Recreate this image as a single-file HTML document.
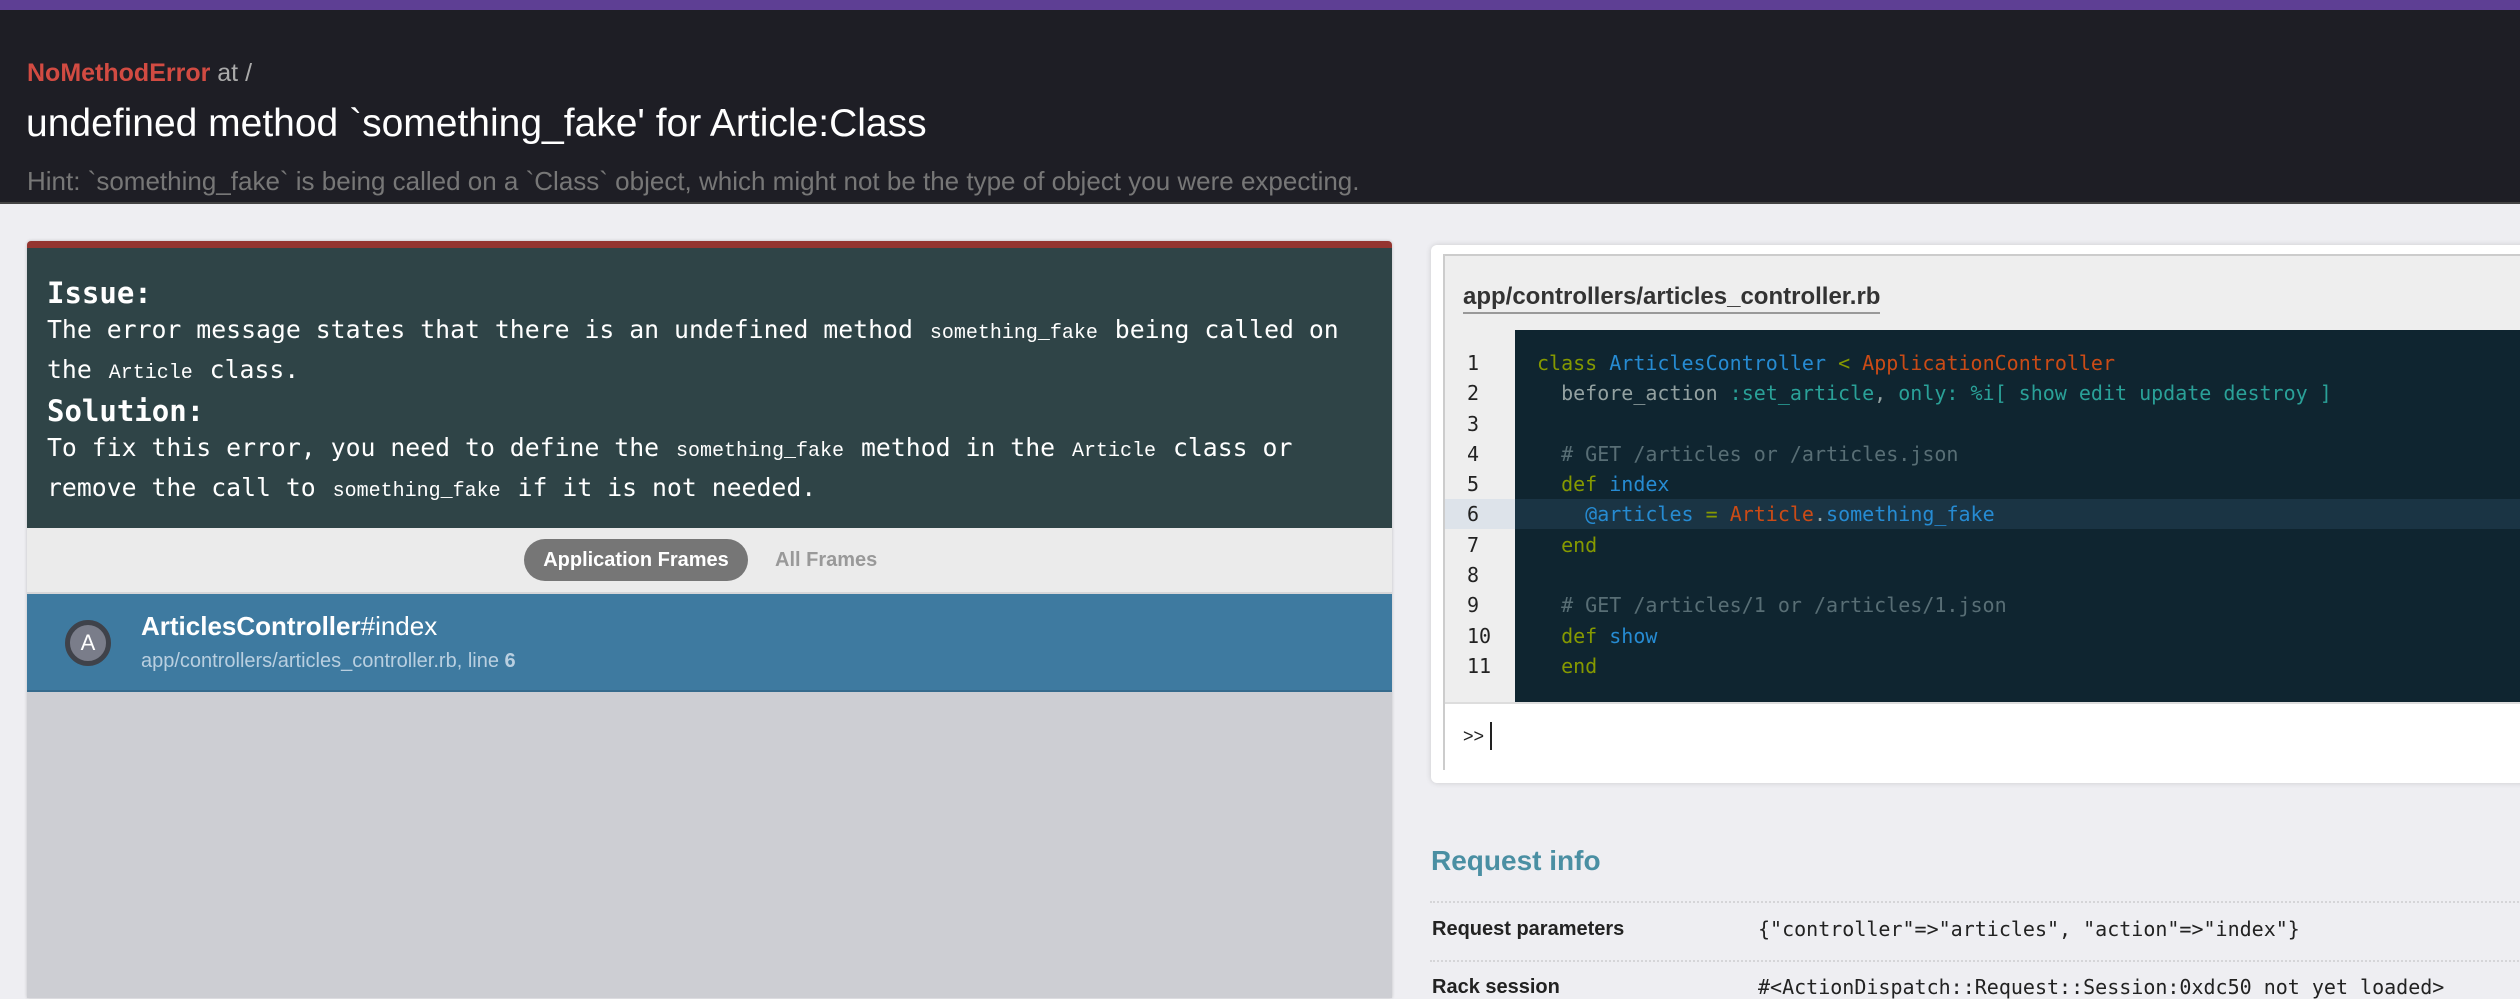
<!DOCTYPE html>
<html><head><meta charset="utf-8"><style>
*{margin:0;padding:0;box-sizing:border-box}
html,body{width:2520px;height:998px;overflow:hidden;background:#eeeef2;font-family:"Liberation Sans",sans-serif}
.top{position:absolute;left:0;top:0;width:2520px;height:10px;background:#5e3f94}
.hdr{position:absolute;left:0;top:10px;width:2520px;height:194px;background:#1e1e25;border-bottom:2px solid #444}
.err{position:absolute;left:27px;top:49px;font-size:25px;color:#aaa}
.err b{color:#d24b42}
.title{position:absolute;left:26px;top:92px;font-size:39px;color:#fff;white-space:nowrap}
.hint{position:absolute;left:27px;top:156px;font-size:26px;color:#777;white-space:nowrap}
.left{position:absolute;left:27px;top:241px;width:1365px;height:757px;background:#cdced3;border-radius:4px 4px 0 0;overflow:hidden;box-shadow:0 0 3px rgba(0,0,0,.2)}
.red{height:7px;background:#943530}
.ai{height:280px;background:#2f4447;color:#fff;font-family:"DejaVu Sans Mono",monospace;font-size:24.8px;padding:26px 20px 0 20px;line-height:36px;white-space:nowrap}
.ai h3{font-size:29px;font-weight:bold;line-height:38px}
.ai code{font-size:20px;padding:0 2px}
.tabs{height:66px;background:#ebebeb;border-bottom:2px solid #d6d6d8;position:relative}
.pill{position:absolute;left:497px;top:11px;width:224px;height:42px;border-radius:21px;background:#767676;color:#fff;font-weight:bold;font-size:20px;text-align:center;line-height:42px}
.all{position:absolute;left:748px;top:11px;line-height:42px;font-size:20px;font-weight:bold;color:#999}
.frame{height:98px;background:#3e7aa0;position:relative;border-bottom:2px solid #356a8c}
.circ{position:absolute;left:38px;top:26px;width:46px;height:46px;border-radius:50%;background:#7a7d8a;border:5px solid #3f424a;color:#fff;text-align:center;line-height:36px;font-size:22px}
.ft{position:absolute;left:114px;top:17px;color:#fff;font-size:26px}
.fs{position:absolute;left:114px;top:56px;color:#b9cfe0;font-size:20px}
.card{position:absolute;left:1431px;top:245px;width:1100px;height:538px;background:#fff;border-radius:6px;box-shadow:0 0 6px rgba(0,0,0,.15)}
.box{position:absolute;left:12px;top:9px;width:1100px;height:516px;background:#eee;border:2px solid #ccc}
.fn{position:absolute;left:18px;top:26px;font-size:24px;font-weight:bold;color:#333;border-bottom:2px solid #999;line-height:30px}
.code{position:absolute;left:70px;top:74px;width:1100px;height:372px;background:#0f2530}
.gut{position:absolute;left:0;top:74px;width:70px;height:372px}
.ln{position:absolute;font-family:"DejaVu Sans Mono",monospace;font-size:20px;line-height:30.3px;white-space:pre}
.gut .ln{left:22px;top:18px;color:#222}
.code .ln{left:22px;top:18px;color:#93a1a1}
.hl1{position:absolute;left:0;top:169px;width:70px;height:30.3px;background:#dde3ea}
.hl2{position:absolute;left:0;top:169px;width:1100px;height:30.3px;background:#1a3444}
.k{color:#859900}.c{color:#268bd2}.o{color:#cb4b16}.cm{color:#586e75}.s{color:#2aa198}
.inp{position:absolute;left:0;top:446px;width:1100px;height:68px;background:#fff;border-top:2px solid #ddd}
.inp span{position:absolute;left:18px;top:22px;font-size:18px;color:#222}
.cur{position:absolute;left:45px;top:18px;width:2px;height:28px;background:#222}
.ri{position:absolute;left:1431px;top:845px;font-size:28px;font-weight:bold;color:#4a8fa3}
.dot{position:absolute;left:1430px;width:1100px;border-top:2px dotted #d5d5d8}
.lbl{position:absolute;left:1432px;font-size:20px;font-weight:bold;color:#222}
.val{position:absolute;left:1758px;font-family:"DejaVu Sans Mono",monospace;font-size:20px;color:#222;white-space:pre}
</style></head><body>
<div class="top"></div>
<div class="hdr">
<div class="err"><b>NoMethodError</b> at /</div>
<div class="title">undefined method `something_fake' for Article:Class</div>
<div class="hint">Hint: `something_fake` is being called on a `Class` object, which might not be the type of object you were expecting.</div>
</div>
<div class="left">
<div class="red"></div>
<div class="ai">
<h3>Issue:</h3>
<div>The error message states that there is an undefined method <code>something_fake</code> being called on<br>the <code>Article</code> class.</div>
<h3>Solution:</h3>
<div>To fix this error, you need to define the <code>something_fake</code> method in the <code>Article</code> class or<br>remove the call to <code>something_fake</code> if it is not needed.</div>
</div>
<div class="tabs"><div class="pill">Application Frames</div><div class="all">All Frames</div></div>
<div class="frame"><div class="circ">A</div><div class="ft"><b>ArticlesController</b>#index</div><div class="fs">app/controllers/articles_controller.rb, line <b>6</b></div></div>
</div>
<div class="card"><div class="box">
<div class="fn">app/controllers/articles_controller.rb</div>
<div class="gut"><div class="hl1"></div><div class="ln">1
2
3
4
5
6
7
8
9
10
11</div></div>
<div class="code"><div class="hl2"></div><div class="ln"><span class="k">class</span> <span class="c">ArticlesController</span> <span class="k">&lt;</span> <span class="o">ApplicationController</span>
  before_action <span class="s">:set_article</span>, <span class="s">only:</span> <span class="s">%i[ show edit update destroy ]</span>

  <span class="cm"># GET /articles or /articles.json</span>
  <span class="k">def</span> <span class="c">index</span>
    <span class="c">@articles</span> <span class="k">=</span> <span class="o">Article</span>.<span class="c">something_fake</span>
  <span class="k">end</span>

  <span class="cm"># GET /articles/1 or /articles/1.json</span>
  <span class="k">def</span> <span class="c">show</span>
  <span class="k">end</span></div></div>
<div class="inp"><span>&gt;&gt;</span><div class="cur"></div></div>
</div></div>
<div class="ri">Request info</div>
<div class="dot" style="top:901px"></div>
<div class="lbl" style="top:918px">Request parameters</div>
<div class="val" style="top:917px">{"controller"=&gt;"articles", "action"=&gt;"index"}</div>
<div class="dot" style="top:960px"></div>
<div class="lbl" style="top:976px">Rack session</div>
<div class="val" style="top:975px">#&lt;ActionDispatch::Request::Session:0xdc50 not yet loaded&gt;</div>
</body></html>
